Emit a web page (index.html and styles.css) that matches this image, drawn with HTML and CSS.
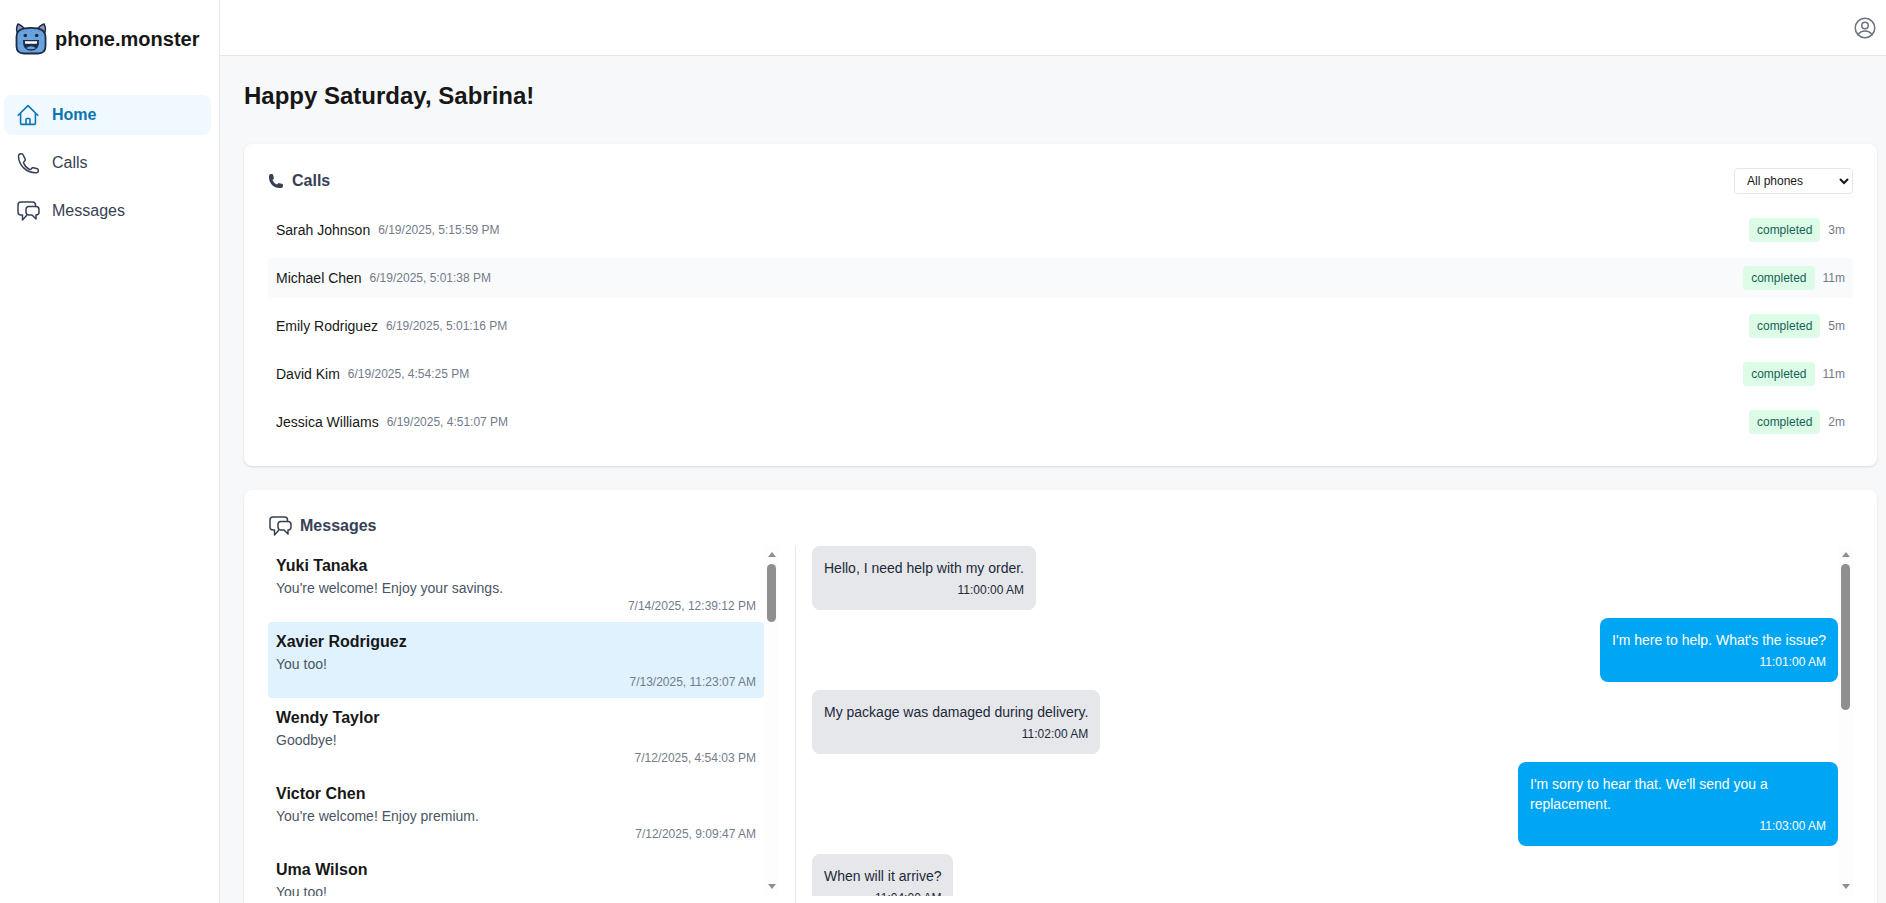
FILE: index.html
```html
<!DOCTYPE html>
<html lang="en">
<head>
    <meta charset="UTF-8">
    <meta name="viewport" content="width=device-width, initial-scale=1.0">
    <title>phone.monster</title>
    <link rel="stylesheet" href="styles.css">
</head>
<body>
    <aside class="sidebar">
        <div class="brand">
            <svg class="brand-logo" viewBox="0 0 32 32">
                <path d="M2.500 10.500C1 6.500 1.500 3.500 3 1C5.500 2 8.500 3.500 9.500 6.500Z" fill="#8c9db5" stroke="#1b2c4a" stroke-width="1.500" stroke-linejoin="round"/>
                <path d="M29.500 10.500C31 6.500 30.500 3.500 29 1C26.500 2 23.500 3.500 22.500 6.500Z" fill="#8c9db5" stroke="#1b2c4a" stroke-width="1.500" stroke-linejoin="round"/>
                <path d="M1.500 14 C1.500 7 7 4.800 16 4.800 S30.500 7 30.500 14 V23 C30.500 28.500 27 30.500 23 30.500 H9 C5 30.500 1.500 28.500 1.500 23 Z" fill="#6ba3de" stroke="#1b2c4a" stroke-width="1.800"/>
                <g fill="#3f78b5">
                    <circle cx="8" cy="8" r=".5"/><circle cx="12" cy="7" r=".5"/><circle cx="16" cy="8" r=".5"/>
                    <circle cx="20" cy="7" r=".5"/><circle cx="24" cy="8" r=".5"/><circle cx="16" cy="12" r=".5"/>
                    <circle cx="5" cy="12" r=".5"/><circle cx="27" cy="12" r=".5"/><circle cx="5" cy="20" r=".5"/>
                    <circle cx="27" cy="20" r=".5"/>
                </g>
                <circle cx="10.300" cy="12.500" r="1.800" fill="#1b2c4a"/>
                <circle cx="21.700" cy="12.500" r="1.800" fill="#1b2c4a"/>
                <path d="M8 17 H24 Q24.500 27.800 16 27.800 Q7.500 27.800 8 17 Z" fill="#1b2c4a"/>
                <path d="M9.800 18.300 H22.200 L21.800 20.800 H10.200 Z" fill="#fff"/>
                <path d="M11 25.200 Q16 21.400 21 25.200 Q16 27.500 11 25.200 Z" fill="#6ba3de"/>
            </svg>
            <span class="brand-name">phone.monster</span>
        </div>
        <nav class="nav">
            <a class="nav-item active">
                <svg class="nav-icon" viewBox="0 0 24 24" fill="none" stroke="currentColor" stroke-width="1.600" stroke-linecap="round" stroke-linejoin="round"><path d="M2.200 12.200 12 2.600l9.800 9.600M4.600 10v10.600a.8.800 0 0 0 .8.800h13.200a.8.800 0 0 0 .8-.8V10M10 21.400v-4.900a1 1 0 0 1 1-1h2a1 1 0 0 1 1 1v4.900"/></svg>
                Home
            </a>
            <a class="nav-item">
                <svg class="nav-icon" viewBox="0 0 24 24" fill="none" stroke="currentColor" stroke-width="1.500" stroke-linecap="round" stroke-linejoin="round"><path d="M2.500 5.500C3 14.500 10 21.500 19.500 21.800h.8c1.300 0 2-.8 2-2v-.6c0-.7-.4-1.200-1-1.400l-3.800-1.100c-.6-.2-1.100 0-1.500.4l-1 1.100c-.4.4-.9.5-1.400.3-2.700-1.200-4.800-3.500-6-6.500-.2-.5 0-1 .3-1.300l1-1c.4-.4.5-.9.4-1.400L7.200 4c-.2-.7-.7-1.200-1.500-1.200H5C3.500 2.800 2.500 3.700 2.500 5.500Z"/></svg>
                Calls
            </a>
            <a class="nav-item">
                <svg class="nav-icon" viewBox="0 0 24 24" fill="none" stroke="currentColor" stroke-width="1.500" stroke-linecap="round" stroke-linejoin="round"><path d="M19.500 7.500V6a3 3 0 0 0-3-3H5a3 3 0 0 0-3 3v7a3 3 0 0 0 3 3h1.500v5l4-4.500"/><path d="M13 7.500h7a3 3 0 0 1 3 3V13a3 3 0 0 1-3 3v4l-4-4h-3a3 3 0 0 1-3-3v-2.500a3 3 0 0 1 3-3Z"/></svg>
                Messages
            </a>
        </nav>
    </aside>

    <div class="content">
        <header class="topbar">
            <svg class="user-icon" viewBox="0 0 24 24" fill="none" stroke="currentColor" stroke-width="1.500" stroke-linecap="round" stroke-linejoin="round"><circle cx="12" cy="12" r="9.750"/><circle cx="12" cy="9.500" r="3.250"/><path d="M5 18.700c1.500-2.300 4-3.700 7-3.700s5.500 1.400 7 3.700"/></svg>
        </header>

        <main class="main">
            <h1 class="greeting">Happy Saturday, Sabrina!</h1>

            <section class="card">
                <div class="card-head">
                    <div class="card-title">
                        <svg class="title-phone" viewBox="0 0 24 24" fill="currentColor"><path d="M1.500 4.500a3 3 0 0 1 3-3h1.372c.860 0 1.610.586 1.819 1.420l1.105 4.423a1.875 1.875 0 0 1-.694 1.955l-1.293.970c-.135.101-.164.249-.126.352a11.285 11.285 0 0 0 6.697 6.697c.103.038.250.009.352-.126l.970-1.293a1.875 1.875 0 0 1 1.955-.694l4.423 1.105c.834.209 1.420.959 1.420 1.820V19.500a3 3 0 0 1-3 3h-2.250C8.552 22.500 1.500 15.448 1.500 6.750V4.500Z"/></svg>
                        Calls
                    </div>
                    <select class="phone-select">
                        <option>All phones</option>
                    </select>
                </div>
                <div class="call-list">
                    <div class="call-row">
                        <span class="call-name">Sarah Johnson</span>
                        <span class="call-date">6/19/2025, 5:15:59 PM</span>
                        <span class="badge">completed</span>
                        <span class="call-date">3m</span>
                    </div>
                    <div class="call-row alt">
                        <span class="call-name">Michael Chen</span>
                        <span class="call-date">6/19/2025, 5:01:38 PM</span>
                        <span class="badge">completed</span>
                        <span class="call-date">11m</span>
                    </div>
                    <div class="call-row">
                        <span class="call-name">Emily Rodriguez</span>
                        <span class="call-date">6/19/2025, 5:01:16 PM</span>
                        <span class="badge">completed</span>
                        <span class="call-date">5m</span>
                    </div>
                    <div class="call-row">
                        <span class="call-name">David Kim</span>
                        <span class="call-date">6/19/2025, 4:54:25 PM</span>
                        <span class="badge">completed</span>
                        <span class="call-date">11m</span>
                    </div>
                    <div class="call-row">
                        <span class="call-name">Jessica Williams</span>
                        <span class="call-date">6/19/2025, 4:51:07 PM</span>
                        <span class="badge">completed</span>
                        <span class="call-date">2m</span>
                    </div>
                </div>
            </section>

            <section class="card">
                <div class="card-head messages-head">
                    <div class="card-title">
                        <svg class="nav-icon" viewBox="0 0 24 24" fill="none" stroke="currentColor" stroke-width="1.500" stroke-linecap="round" stroke-linejoin="round"><path d="M19.500 7.500V6a3 3 0 0 0-3-3H5a3 3 0 0 0-3 3v7a3 3 0 0 0 3 3h1.500v5l4-4.500"/><path d="M13 7.500h7a3 3 0 0 1 3 3V13a3 3 0 0 1-3 3v4l-4-4h-3a3 3 0 0 1-3-3v-2.500a3 3 0 0 1 3-3Z"/></svg>
                        Messages
                    </div>
                </div>
                <div class="messages">
                    <div class="thread-pane">
                        <div class="thread-list">
                            <div class="thread"><div class="thread-name">Yuki Tanaka</div><div class="thread-text">You're welcome! Enjoy your savings.</div><div class="thread-time">7/14/2025, 12:39:12 PM</div></div>
                            <div class="thread selected"><div class="thread-name">Xavier Rodriguez</div><div class="thread-text">You too!</div><div class="thread-time">7/13/2025, 11:23:07 AM</div></div>
                            <div class="thread"><div class="thread-name">Wendy Taylor</div><div class="thread-text">Goodbye!</div><div class="thread-time">7/12/2025, 4:54:03 PM</div></div>
                            <div class="thread"><div class="thread-name">Victor Chen</div><div class="thread-text">You're welcome! Enjoy premium.</div><div class="thread-time">7/12/2025, 9:09:47 AM</div></div>
                            <div class="thread"><div class="thread-name">Uma Wilson</div><div class="thread-text">You too!</div></div>
                        </div>
                        <div class="scrollbar">
                            <div class="arrow-up"></div>
                            <div class="thumb thumb-short"></div>
                            <div class="arrow-down"></div>
                        </div>
                    </div>
                    <div class="chat-pane">
                        <div class="chat">
                            <div class="bubble in"><div>Hello, I need help with my order.</div><div class="bubble-time">11:00:00 AM</div></div>
                            <div class="bubble out"><div>I'm here to help. What's the issue?</div><div class="bubble-time">11:01:00 AM</div></div>
                            <div class="bubble in"><div>My package was damaged during delivery.</div><div class="bubble-time">11:02:00 AM</div></div>
                            <div class="bubble out"><div>I'm sorry to hear that. We'll send you a replacement.</div><div class="bubble-time">11:03:00 AM</div></div>
                            <div class="bubble in"><div>When will it arrive?</div><div class="bubble-time">11:04:00 AM</div></div>
                        </div>
                        <div class="scrollbar">
                            <div class="arrow-up"></div>
                            <div class="thumb thumb-long"></div>
                            <div class="arrow-down"></div>
                        </div>
                    </div>
                </div>
            </section>
        </main>
    </div>
</body>
</html>
```

FILE: styles.css
```css
* {
    box-sizing: border-box;
}

body {
    margin: 0;
    display: flex;
    height: 100vh;
    overflow: hidden;
    font-family: "Liberation Sans", Arial, sans-serif;
    color: #171717;
    background: #f7f8fa;
}

.sidebar {
    width: 220px;
    flex-shrink: 0;
    background: white;
    border-right: 1px solid #e5e7eb;
}

.brand {
    display: flex;
    align-items: flex-start;
    gap: 8px;
    padding: 23px 15px 0;
    height: 95px;
}

.brand-logo {
    width: 32px;
    height: 32px;
}

.brand-name {
    font-size: 20px;
    font-weight: bold;
    line-height: 32px;
}

.nav {
    display: flex;
    flex-direction: column;
    gap: 8px;
    padding: 0 8px 0 4px;
}

.nav-item {
    display: flex;
    align-items: center;
    gap: 12px;
    height: 40px;
    padding: 0 12px;
    border-radius: 8px;
    font-size: 16px;
    color: #364153;
}

.nav-item.active {
    background: #f0f9ff;
    color: #0b76b0;
    font-weight: bold;
}

.nav-icon {
    width: 24px;
    height: 24px;
    flex-shrink: 0;
}

.content {
    flex: 1;
    min-width: 0;
    display: flex;
    flex-direction: column;
}

.topbar {
    height: 56px;
    flex-shrink: 0;
    display: flex;
    align-items: center;
    justify-content: flex-end;
    padding-right: 9px;
    background: white;
    border-bottom: 1px solid #e5e7eb;
}

.user-icon {
    width: 24px;
    height: 24px;
    color: #6a7282;
}

.main {
    flex: 1;
    min-height: 0;
    overflow: hidden;
    padding: 24px 9px 24px 24px;
}

.greeting {
    margin: 0 0 32px;
    font-size: 24px;
    line-height: 32px;
    font-weight: bold;
}

.card {
    background: white;
    border-radius: 8px;
    padding: 24px;
    margin-bottom: 24px;
    box-shadow: 0 1px 3px rgba(0, 0, 0, 0.1), 0 1px 2px -1px rgba(0, 0, 0, 0.1);
}

.card-head {
    display: flex;
    align-items: center;
    justify-content: space-between;
    margin-bottom: 16px;
}

.messages-head {
    height: 24px;
    margin-bottom: 8px;
}

.card-title {
    display: flex;
    align-items: center;
    gap: 8px;
    font-size: 16px;
    font-weight: bold;
    color: #364153;
}

.title-phone {
    width: 16px;
    height: 16px;
}

.phone-select {
    width: 119px;
    height: 26px;
    padding: 4px 8px;
    font-family: inherit;
    font-size: 12px;
    color: #171717;
    background: white;
    border: 1px solid #e5e7eb;
    border-radius: 4px;
}

.call-list {
    display: flex;
    flex-direction: column;
    gap: 8px;
}

.call-row {
    display: flex;
    align-items: center;
    gap: 8px;
    height: 40px;
    padding: 0 8px;
    border-radius: 4px;
}

.call-row.alt {
    background: #f9fafb;
}

.call-name {
    font-size: 14px;
}

.call-date {
    font-size: 12px;
    color: #737b8a;
}

.badge {
    margin-left: auto;
    padding: 0 8px;
    height: 24px;
    line-height: 24px;
    font-size: 12px;
    color: #176355;
    background: #dcfce7;
    border-radius: 4px;
}

.messages {
    display: grid;
    grid-template-columns: 527px 1fr;
}

.thread-pane {
    display: flex;
    height: 350px;
    margin-right: 16px;
}

.thread-list {
    flex: 1;
    min-width: 0;
    overflow: hidden;
}

.thread {
    height: 76px;
    padding: 8px;
    border-radius: 4px;
}

.thread.selected {
    background: #dff2fe;
}

.thread-name {
    font-size: 16px;
    line-height: 24px;
    font-weight: bold;
}

.thread-text {
    font-size: 14px;
    line-height: 20px;
    color: #4a5565;
}

.thread-time {
    font-size: 12px;
    line-height: 16px;
    text-align: right;
    color: #737b8a;
}

.chat-pane {
    display: flex;
    align-items: flex-start;
    padding: 0 0 24px 16px;
    border-left: 1px solid #e5e7eb;
}

.chat {
    flex: 1;
    min-width: 0;
    height: 350px;
    display: flex;
    flex-direction: column;
    align-items: flex-start;
    gap: 8px;
    overflow: hidden;
}

.bubble {
    flex-shrink: 0;
    max-width: 320px;
    padding: 12px;
    border-radius: 8px;
    font-size: 14px;
    line-height: 20px;
}

.bubble.in {
    background: #e5e7eb;
    color: #1e2939;
}

.bubble.out {
    align-self: flex-end;
    background: #00a6f4;
    color: white;
}

.bubble-time {
    margin-top: 4px;
    font-size: 12px;
    line-height: 16px;
    text-align: right;
}

/* drawn by hand, headless chrome hides the real ones */
.scrollbar {
    width: 15px;
    height: 350px;
    flex-shrink: 0;
    display: flex;
    flex-direction: column;
    align-items: center;
    padding: 6px 0 7px;
    background: #fdfdfd;
}

.arrow-up,
.arrow-down {
    width: 0;
    height: 0;
    border-left: 4.5px solid transparent;
    border-right: 4.5px solid transparent;
}

.arrow-up {
    border-bottom: 5px solid #8f8f8f;
}

.arrow-down {
    margin-top: auto;
    border-top: 5px solid #8f8f8f;
}

.thumb {
    width: 9px;
    margin-top: 7px;
    background: #8f8f8f;
    border-radius: 5px;
}

.thumb-short {
    height: 58px;
}

.thumb-long {
    height: 146px;
}
```
